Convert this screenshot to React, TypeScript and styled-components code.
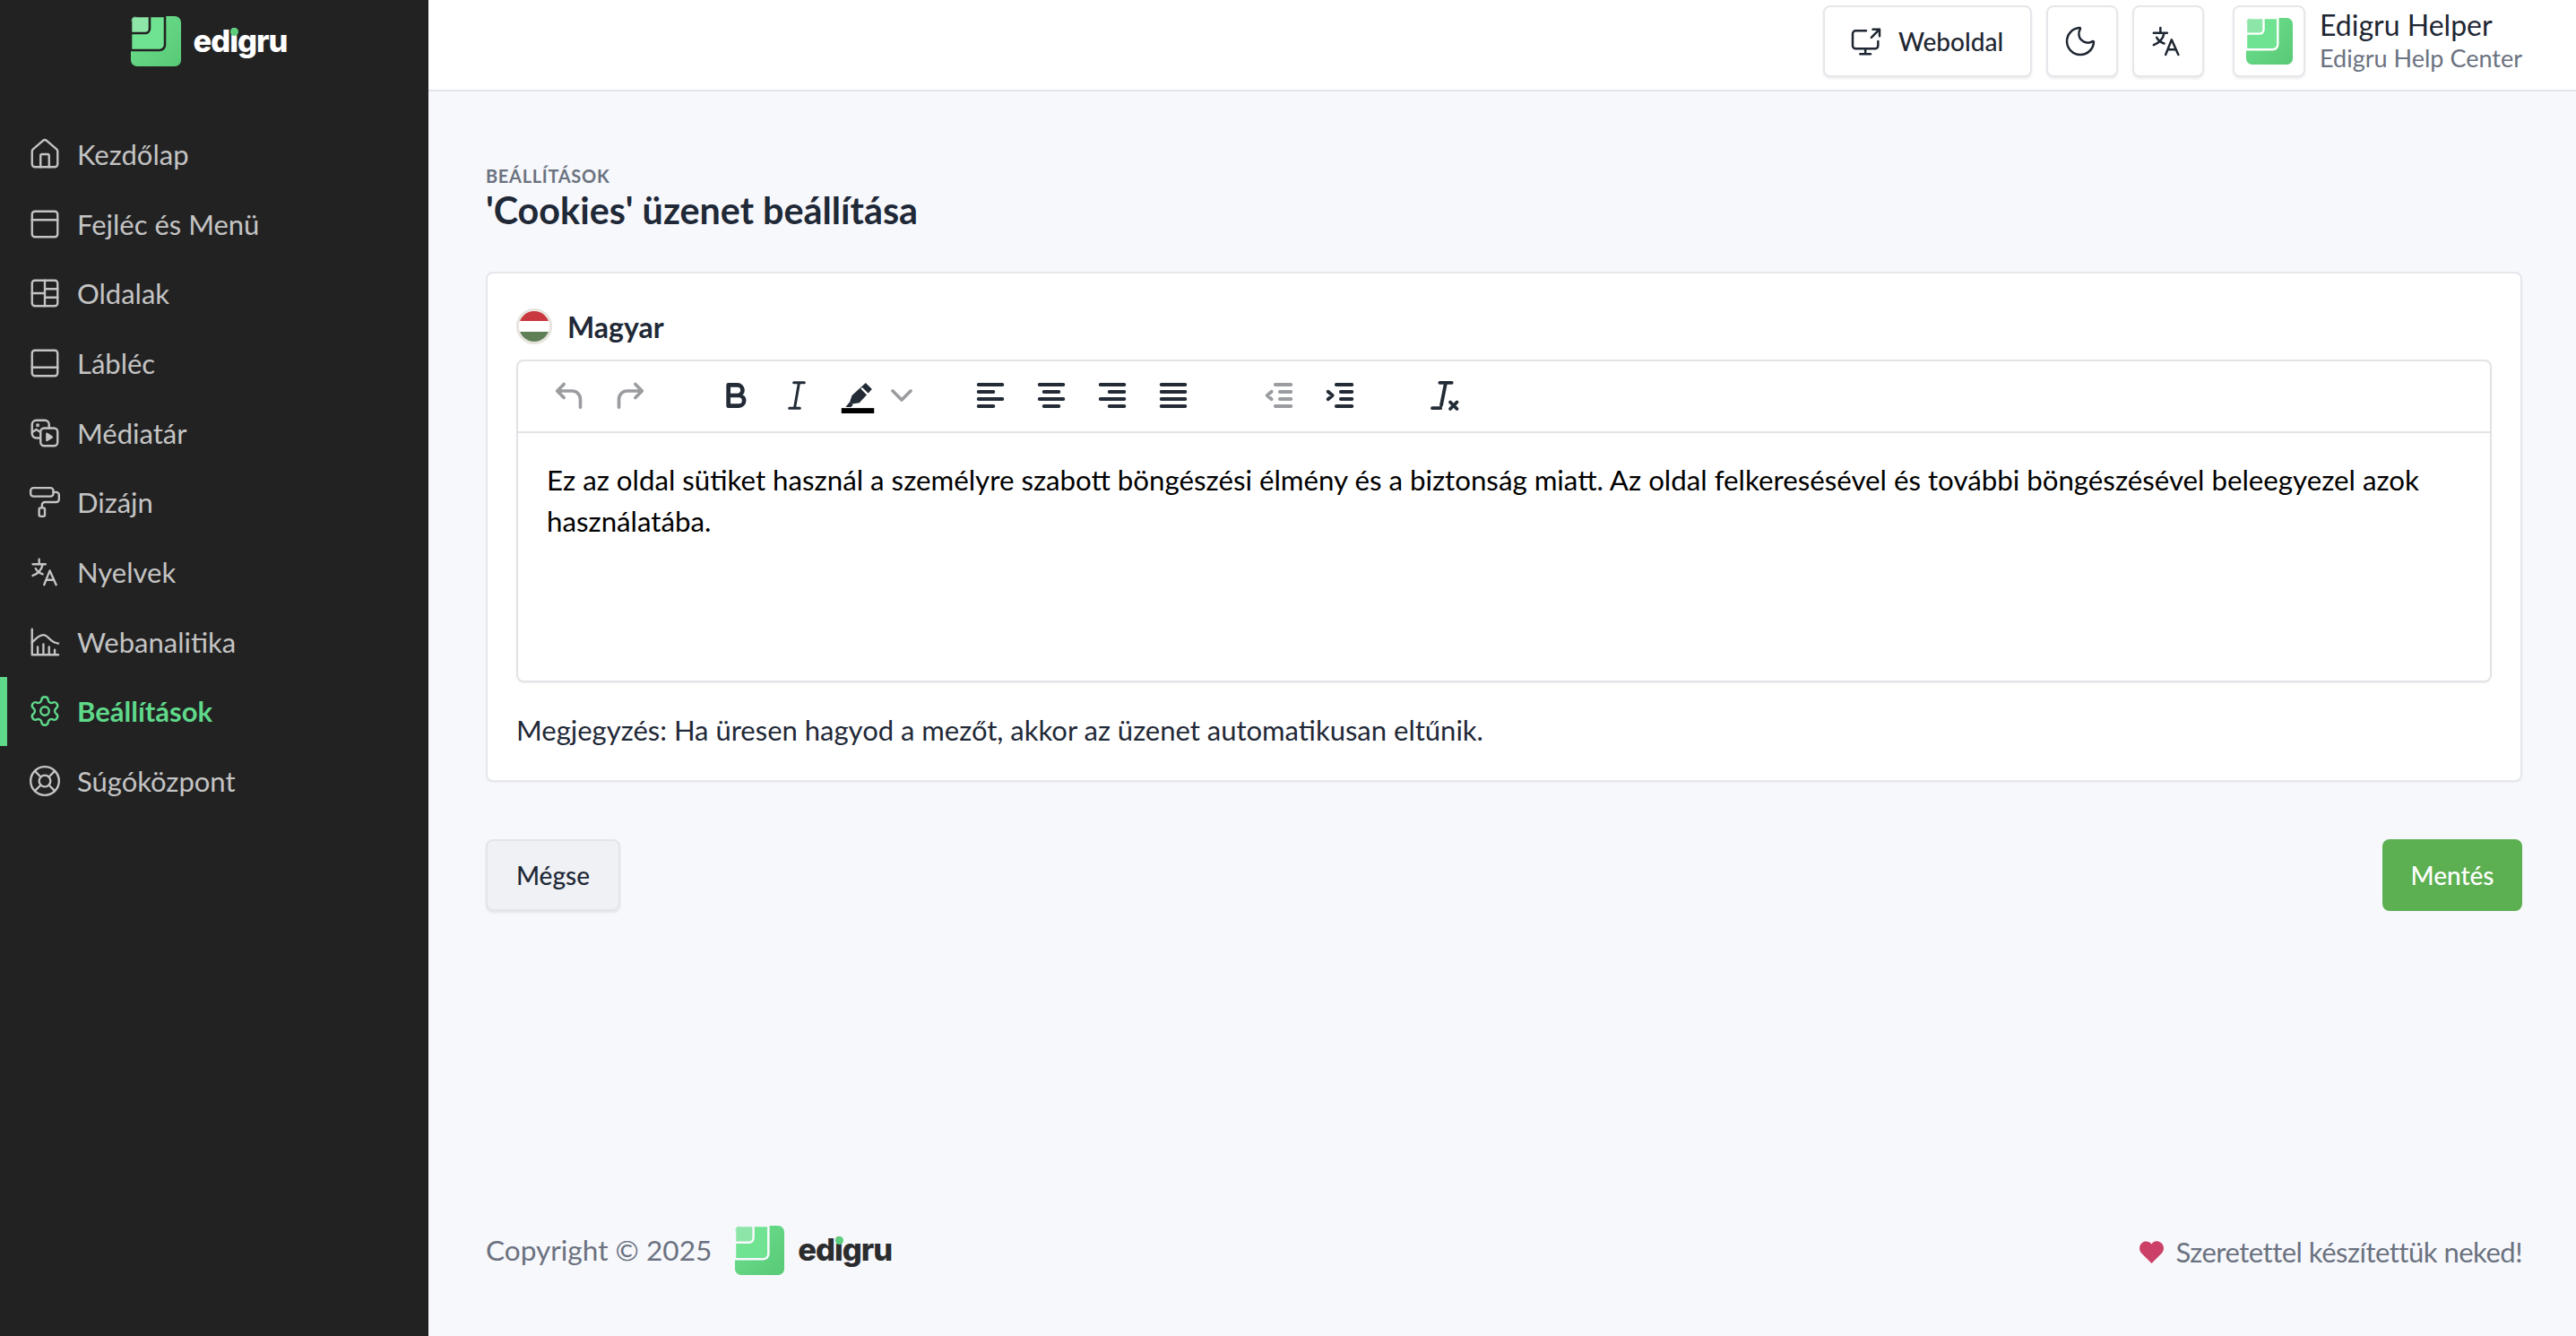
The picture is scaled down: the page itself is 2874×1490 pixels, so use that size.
import React from 'react';
import styled, { createGlobalStyle } from 'styled-components';
import { House, PanelTop, PanelBottom, PaintRoller, Settings, LifeBuoy, Moon, ChevronDown } from 'lucide-react';

const Global = createGlobalStyle`
  html, body { margin: 0; padding: 0; background: #f7f8fc; }
  body { font-family: Lato, "Open Sans", sans-serif; }
  * { box-sizing: border-box; }
`;

const Page = styled.div`
  display: grid;
  grid-template-columns: 478px 1fr;
  height: 1490px;
  overflow: hidden;
`;
const Sidebar = styled.aside`
  background: #222223;
  display: flex;
  flex-direction: column;
`;
const SideBrand = styled.div`
  display: flex;
  align-items: center;
  justify-content: center;
  gap: 14px;
  height: 92px;
  padding-right: 12px;
  margin-bottom: 41px;
`;
const Wordmark = styled.span<{ $dark?: boolean }>`
  font-family: Inter, Lato, sans-serif;
  font-weight: 800;
  font-size: 34.5px;
  letter-spacing: -1px;
  line-height: 1;
  color: ${p => (p.$dark ? '#2b2c2e' : '#ffffff')};
`;
const WordI = styled.span`
  position: relative;
  &::before {
    content: '';
    position: absolute;
    left: 0.5px;
    top: 6px;
    width: 9px;
    height: 9px;
    border-radius: 50%;
    background: #5dce7c;
  }
`;
const Nav = styled.nav`
  display: flex;
  flex-direction: column;
`;
const NavItem = styled.a<{ $active?: boolean }>`
  display: flex;
  align-items: center;
  gap: 17px;
  height: 77.7px;
  padding-left: ${p => (p.$active ? '23px' : '31px')};
  border-left: ${p => (p.$active ? '8px solid #5fd98a' : '0')};
  color: ${p => (p.$active ? '#5fd98a' : '#c4c4c4')};
  font-size: 31px;
  font-weight: ${p => (p.$active ? 700 : 400)};
  svg { width: 38px; height: 38px; flex: none; stroke-width: 1.5; }
`;
const Main = styled.main`
  display: flex;
  flex-direction: column;
  min-width: 0;
`;
const Header = styled.header`
  display: flex;
  align-items: center;
  justify-content: flex-end;
  height: 102px;
  padding: 0 60px 9px 0;
  background: #fff;
  border-bottom: 2px solid #e3e5ea;
`;
const HeadButton = styled.button<{ $wide?: boolean }>`
  display: flex;
  align-items: center;
  justify-content: center;
  gap: 16px;
  width: ${p => (p.$wide ? '233px' : '80px')};
  height: 80px;
  margin-right: 16px;
  background: #fff;
  border: 2px solid #e5e7eb;
  border-radius: 8px;
  box-shadow: 0 2px 3px rgba(0,0,0,.08);
  color: #1f2733;
  font-family: inherit;
  font-size: 28px;
  font-weight: 500;
  padding: 0 4px 0 0;
  svg { width: 40px; height: 40px; flex: none; }
`;
const Avatar = styled.div`
  display: flex;
  align-items: center;
  justify-content: center;
  width: 81px;
  height: 80px;
  margin-left: 16px;
  background: #fff;
  border: 2px solid #e5e7eb;
  border-radius: 8px;
  box-shadow: 0 2px 3px rgba(0,0,0,.08);
`;
const UserBox = styled.div`
  display: flex;
  flex-direction: column;
  margin-left: 16px;
`;
const UserName = styled.span`
  font-size: 32px;
  line-height: 38px;
  color: #1f2733;
`;
const UserSub = styled.span`
  font-size: 27px;
  line-height: 36px;
  color: #6b7280;
`;
const Content = styled.div`
  display: flex;
  flex: 1;
  flex-direction: column;
  padding: 81px 60px 0 64px;
`;
const Eyebrow = styled.div`
  font-size: 20px;
  line-height: 26px;
  font-weight: 700;
  letter-spacing: .7px;
  text-transform: uppercase;
  color: #6b7280;
`;
const Title = styled.h1`
  margin: 0 0 44px;
  font-size: 41.3px;
  line-height: 50px;
  font-weight: 700;
  color: #1f2937;
`;
const Card = styled.section`
  display: flex;
  flex-direction: column;
  height: 569px;
  padding: 0 32px;
  background: #fff;
  border: 2px solid #e5e7eb;
  border-radius: 8px;
  box-shadow: 0 1px 2px rgba(0,0,0,.04);
`;
const LangRow = styled.div`
  display: flex;
  align-items: center;
  gap: 17px;
  height: 96px;
  padding-top: 22px;
  font-size: 32px;
  font-weight: 700;
  color: #1f2937;
`;
const Flag = styled.span`
  display: flex;
  flex-direction: column;
  justify-content: center;
  width: 40px;
  height: 40px;
  border: 3px solid #e7e4dd;
  border-radius: 50%;
  overflow: hidden;
  flex: none;
`;
const FlagBand = styled.span<{ $c: string }>`
  flex: 1;
  background: ${p => p.$c};
`;
const Editor = styled.div`
  height: 360px;
  border: 2px solid #e1e3e6;
  border-radius: 8px;
  box-shadow: 0 1px 2px rgba(0,0,0,.05);
`;
const Toolbar = styled.div`
  display: flex;
  align-items: center;
  gap: 50px;
  height: 80px;
  padding: 0 0 3px 23px;
  border-bottom: 2px solid #e1e3e6;
`;
const ToolGroup = styled.div`
  display: flex;
  align-items: center;
`;
const ToolButton = styled.span<{ $off?: boolean; $narrow?: boolean }>`
  display: flex;
  align-items: center;
  justify-content: center;
  width: ${p => (p.$narrow ? '30px' : '68px')};
  color: ${p => (p.$off ? '#9a9ca0' : '#222b36')};
  svg { width: 40px; height: 40px; display: block; flex: none; }
`;
const Body = styled.div`
  padding: 30px 32px;
  font-size: 31.25px;
  line-height: 45.5px;
  color: #000;
`;
const Note = styled.p`
  margin: 34px 0 0;
  font-size: 31px;
  line-height: 38px;
  color: #1f2937;
`;
const Actions = styled.div`
  display: flex;
  justify-content: space-between;
  margin-top: 64px;
`;
const CancelButton = styled.button`
  width: 150px;
  height: 80px;
  background: #f0f1f4;
  border: 2px solid #e3e5e9;
  border-radius: 8px;
  box-shadow: 0 2px 3px rgba(0,0,0,.08);
  font-family: inherit;
  font-size: 28px;
  font-weight: 500;
  color: #1f2937;
`;
const SaveButton = styled.button`
  width: 156px;
  height: 80px;
  background: #5cb052;
  border: 0;
  border-radius: 8px;
  font-family: inherit;
  font-size: 28px;
  font-weight: 500;
  color: #fff;
`;
const Footer = styled.footer`
  display: flex;
  align-items: center;
  justify-content: space-between;
  margin-top: auto;
  height: 56px;
  margin-bottom: 68px;
`;
const FootLeft = styled.div`
  display: flex;
  align-items: center;
  font-size: 31.6px;
  color: #6b7280;
`;
const FootLogo = styled.div`
  display: flex;
  align-items: center;
  gap: 15px;
  margin-left: 26px;
`;
const FootRight = styled.div`
  display: flex;
  align-items: center;
  gap: 13px;
  padding-top: 4px;
  font-size: 31px;
  letter-spacing: -0.5px;
  color: #6b7280;
`;

const Logo = ({ size, gap }: { size: number; gap: string }) => (
  <svg width={size} height={size} viewBox="0 0 56 56" aria-hidden="true">
    <defs>
      <clipPath id={`clip${size}`}><rect width="56" height="56" rx="7" /></clipPath>
      <linearGradient id={`grad${size}`} x1="0" y1="0" x2="1" y2="1">
        <stop offset="0" stopColor="#6ee08f" />
        <stop offset="1" stopColor="#58c975" />
      </linearGradient>
    </defs>
    <g clipPath={`url(#clip${size})`}>
      <rect width="56" height="56" fill={`url(#grad${size})`} />
      <path d="M0 0H38V32a6 6 0 0 1-6 6H0Z" fill="#6fe391" stroke={gap} strokeWidth="2.6" />
      <path d="M0 0H21V14a5 5 0 0 1-5 5H0Z" fill="#8de6a8" stroke={gap} strokeWidth="2.6" />
    </g>
  </svg>
);

const Brand = ({ dark }: { dark?: boolean }) => (
  <Wordmark $dark={dark}>ed<WordI>i</WordI>gru</Wordmark>
);

const Stroke = ({ children, w = 2 }: { children: React.ReactNode; w?: number }) => (
  <svg viewBox="0 0 24 24" fill="none" stroke="currentColor" strokeWidth={w} strokeLinecap="round" strokeLinejoin="round" aria-hidden="true">
    {children}
  </svg>
);

const GridIcon = () => (
  <Stroke w={1.5}><rect x="3" y="3" width="18" height="18" rx="2" /><path d="M12 3v18M3 12h9M12 9h9M12 15h9" /></Stroke>
);
const MediaIcon = () => (
  <Stroke w={1.5}>
    <path d="M8.500 15.500H6a3 3 0 0 1-3-3V6a3 3 0 0 1 3-3h6a3 3 0 0 1 3 3v2.500" />
    <circle cx="7" cy="6.500" r=".5" />
    <path d="M3 11.500l3-2 2.500 1.500" />
    <rect x="9" y="8.500" width="12" height="12.500" rx="2.500" />
    <path d="M13.500 12.500l3.500 2.300-3.500 2.300Z" fill="currentColor" />
  </Stroke>
);
const LangIcon = () => (
  <Stroke w={1.5}>
    <path d="M3.500 6.500h9M8 3v3.500M10.500 6.500c-.7 4-3 6.500-7 8M5.500 9.500c1 1.800 2.600 3.200 5 4" />
    <path d="M11.500 21l4-10 4.500 10M13 17.500h5.500" />
  </Stroke>
);
const ChartIcon = () => (
  <Stroke w={1.3}>
    <path d="M3 3v18h18.500" />
    <path d="M3 12.500c2.500-2.500 4.500-5.500 8-5.500s4.500 5.500 10.500 6" />
    <path d="M7 20.500v-5M11 20.500v-7M15 20.500v-5M19 20.500v-3" />
  </Stroke>
);
const WebIcon = () => (
  <Stroke w={1.5}>
    <path d="M20 12v3a2 2 0 0 1-2 2H5a2 2 0 0 1-2-2V7a2 2 0 0 1 2-2h7" />
    <path d="M8 20.500h7M11.500 17v3.500M15.500 9.500l5.500-5.500M16.500 4H21v4.500" />
  </Stroke>
);
const rowsToPaths = (rows: [number, number][]) => rows.map(([a, b], i) => (
  <path key={i} d={`M${a} ${4.8 + i * 4.8}H${b}`} />
));
const Align = ({ rows }: { rows: [number, number][] }) => <Stroke w={2.3}>{rowsToPaths(rows)}</Stroke>;
const BoldIcon = () => (
  <Stroke w={2.8}><path d="M7 5h6a3.500 3.500 0 0 1 0 7H7ZM7 12h7a3.500 3.500 0 0 1 0 7H7Z" /></Stroke>
);
const ItalicIcon = () => (
  <Stroke w={1.8}><path d="M10 3.500h7M7 20.500h7M13.500 3.500l-3 17" /></Stroke>
);
const Highlight = () => (
  <svg viewBox="-1.500 -2 34 34" aria-hidden="true">
    <path d="M23 3l6 6-12 13-7 1-2-2 2-6Z" fill="currentColor" />
    <path d="M19 8l6 6" stroke="#fff" strokeWidth="2" />
    <path d="M8 21l3 3-2 2H4Z" fill="currentColor" />
    <rect x="0" y="27" width="31" height="5" fill="#000" />
  </svg>
);
const Outdent = () => (
  <Stroke w={2.3}><path d="M9.500 4.800h10.500M12.500 9.600H20M12.500 14.400H20M9.500 19.200h10.500M7 9.500l-3 2.500 3 2.500" /></Stroke>
);
const Indent = () => (
  <Stroke w={2.3}><path d="M9.500 4.800h10.500M12.500 9.600H20M12.500 14.400H20M9.500 19.200h10.500M4 9.500l3 2.500-3 2.500" /></Stroke>
);
const ClearFormat = () => (
  <Stroke w={2.3}><path d="M8 3.500h8M12 3.500L9 18.500M3 20.500h5.500M15 16.500l4.500 4.500M19.500 16.500L15 21" /></Stroke>
);
const Heart = () => (
  <svg width="27" height="25" viewBox="0 0 27 25" aria-hidden="true">
    <path d="M13.500 25L2 13.500C-1 10-.5 4.500 3 2c3.500-2.500 8-1.500 10.500 1.500C16-.5 20.500-.5 24 2c3.500 2.500 4 8 1 11.500Z" fill="#cc4068" />
  </svg>
);

const navItems: [React.ReactNode, string, boolean?][] = [
  [<House key="a" />, 'Kezdőlap'],
  [<PanelTop key="b" />, 'Fejléc és Menü'],
  [<GridIcon key="c" />, 'Oldalak'],
  [<PanelBottom key="d" />, 'Lábléc'],
  [<MediaIcon key="e" />, 'Médiatár'],
  [<PaintRoller key="f" />, 'Dizájn'],
  [<LangIcon key="g" />, 'Nyelvek'],
  [<ChartIcon key="h" />, 'Webanalitika'],
  [<Settings key="i" />, 'Beállítások', true],
  [<LifeBuoy key="j" />, 'Súgóközpont'],
];

export default function App() {
  return (
    <>
      <Global />
      <Page>
        <Sidebar>
          <SideBrand>
            <Logo size={56} gap="#222223" />
            <Brand />
          </SideBrand>
          <Nav>
            {navItems.map(([icon, label, active]) => (
              <NavItem key={label} $active={active}>{icon}{label}</NavItem>
            ))}
          </Nav>
        </Sidebar>
        <Main>
          <Header>
            <HeadButton $wide><WebIcon />Weboldal</HeadButton>
            <HeadButton><Moon strokeWidth={1.5} /></HeadButton>
            <HeadButton><LangIcon /></HeadButton>
            <Avatar><Logo size={52} gap="#ffffff" /></Avatar>
            <UserBox>
              <UserName>Edigru Helper</UserName>
              <UserSub>Edigru Help Center</UserSub>
            </UserBox>
          </Header>
          <Content>
            <Eyebrow>Beállítások</Eyebrow>
            <Title>'Cookies' üzenet beállítása</Title>
            <Card>
              <LangRow>
                <Flag><FlagBand $c="#c9383f" /><FlagBand $c="#ffffff" /><FlagBand $c="#5f7f57" /></Flag>
                Magyar
              </LangRow>
              <Editor>
                <Toolbar>
                  <ToolGroup>
                    <ToolButton $off><Stroke w={2.2}><path d="M8.500 4.500L4 9l4.500 4.500M4.500 9H14a5.500 5.500 0 0 1 5.500 5.500V20" /></Stroke></ToolButton>
                    <ToolButton $off><Stroke w={2.2}><path d="M15.500 4.500L20 9l-4.500 4.500M19.500 9H10a5.500 5.500 0 0 0-5.500 5.500V20" /></Stroke></ToolButton>
                  </ToolGroup>
                  <ToolGroup>
                    <ToolButton><BoldIcon /></ToolButton>
                    <ToolButton><ItalicIcon /></ToolButton>
                    <ToolButton><Highlight /></ToolButton>
                    <ToolButton $off $narrow><ChevronDown strokeWidth={2.2} /></ToolButton>
                  </ToolGroup>
                  <ToolGroup>
                    <ToolButton><Align rows={[[4, 20], [4, 14], [4, 20], [4, 14]]} /></ToolButton>
                    <ToolButton><Align rows={[[4, 20], [7, 17], [4, 20], [7, 17]]} /></ToolButton>
                    <ToolButton><Align rows={[[4, 20], [10, 20], [4, 20], [10, 20]]} /></ToolButton>
                    <ToolButton><Align rows={[[4, 20], [4, 20], [4, 20], [4, 20]]} /></ToolButton>
                  </ToolGroup>
                  <ToolGroup>
                    <ToolButton $off><Outdent /></ToolButton>
                    <ToolButton><Indent /></ToolButton>
                  </ToolGroup>
                  <ToolGroup>
                    <ToolButton><ClearFormat /></ToolButton>
                  </ToolGroup>
                </Toolbar>
                <Body>
                  Ez az oldal sütiket használ a személyre szabott böngészési élmény és a biztonság miatt. Az oldal felkeresésével és további böngészésével beleegyezel azok használatába.
                </Body>
              </Editor>
              <Note>Megjegyzés: Ha üresen hagyod a mezőt, akkor az üzenet automatikusan eltűnik.</Note>
            </Card>
            <Actions>
              <CancelButton>Mégse</CancelButton>
              <SaveButton>Mentés</SaveButton>
            </Actions>
            <Footer>
              <FootLeft>
                Copyright © 2025
                <FootLogo>
                  <Logo size={55} gap="#f7f8fc" />
                  <Brand dark />
                </FootLogo>
              </FootLeft>
              <FootRight><Heart />Szeretettel készítettük neked!</FootRight>
            </Footer>
          </Content>
        </Main>
      </Page>
    </>
  );
}
